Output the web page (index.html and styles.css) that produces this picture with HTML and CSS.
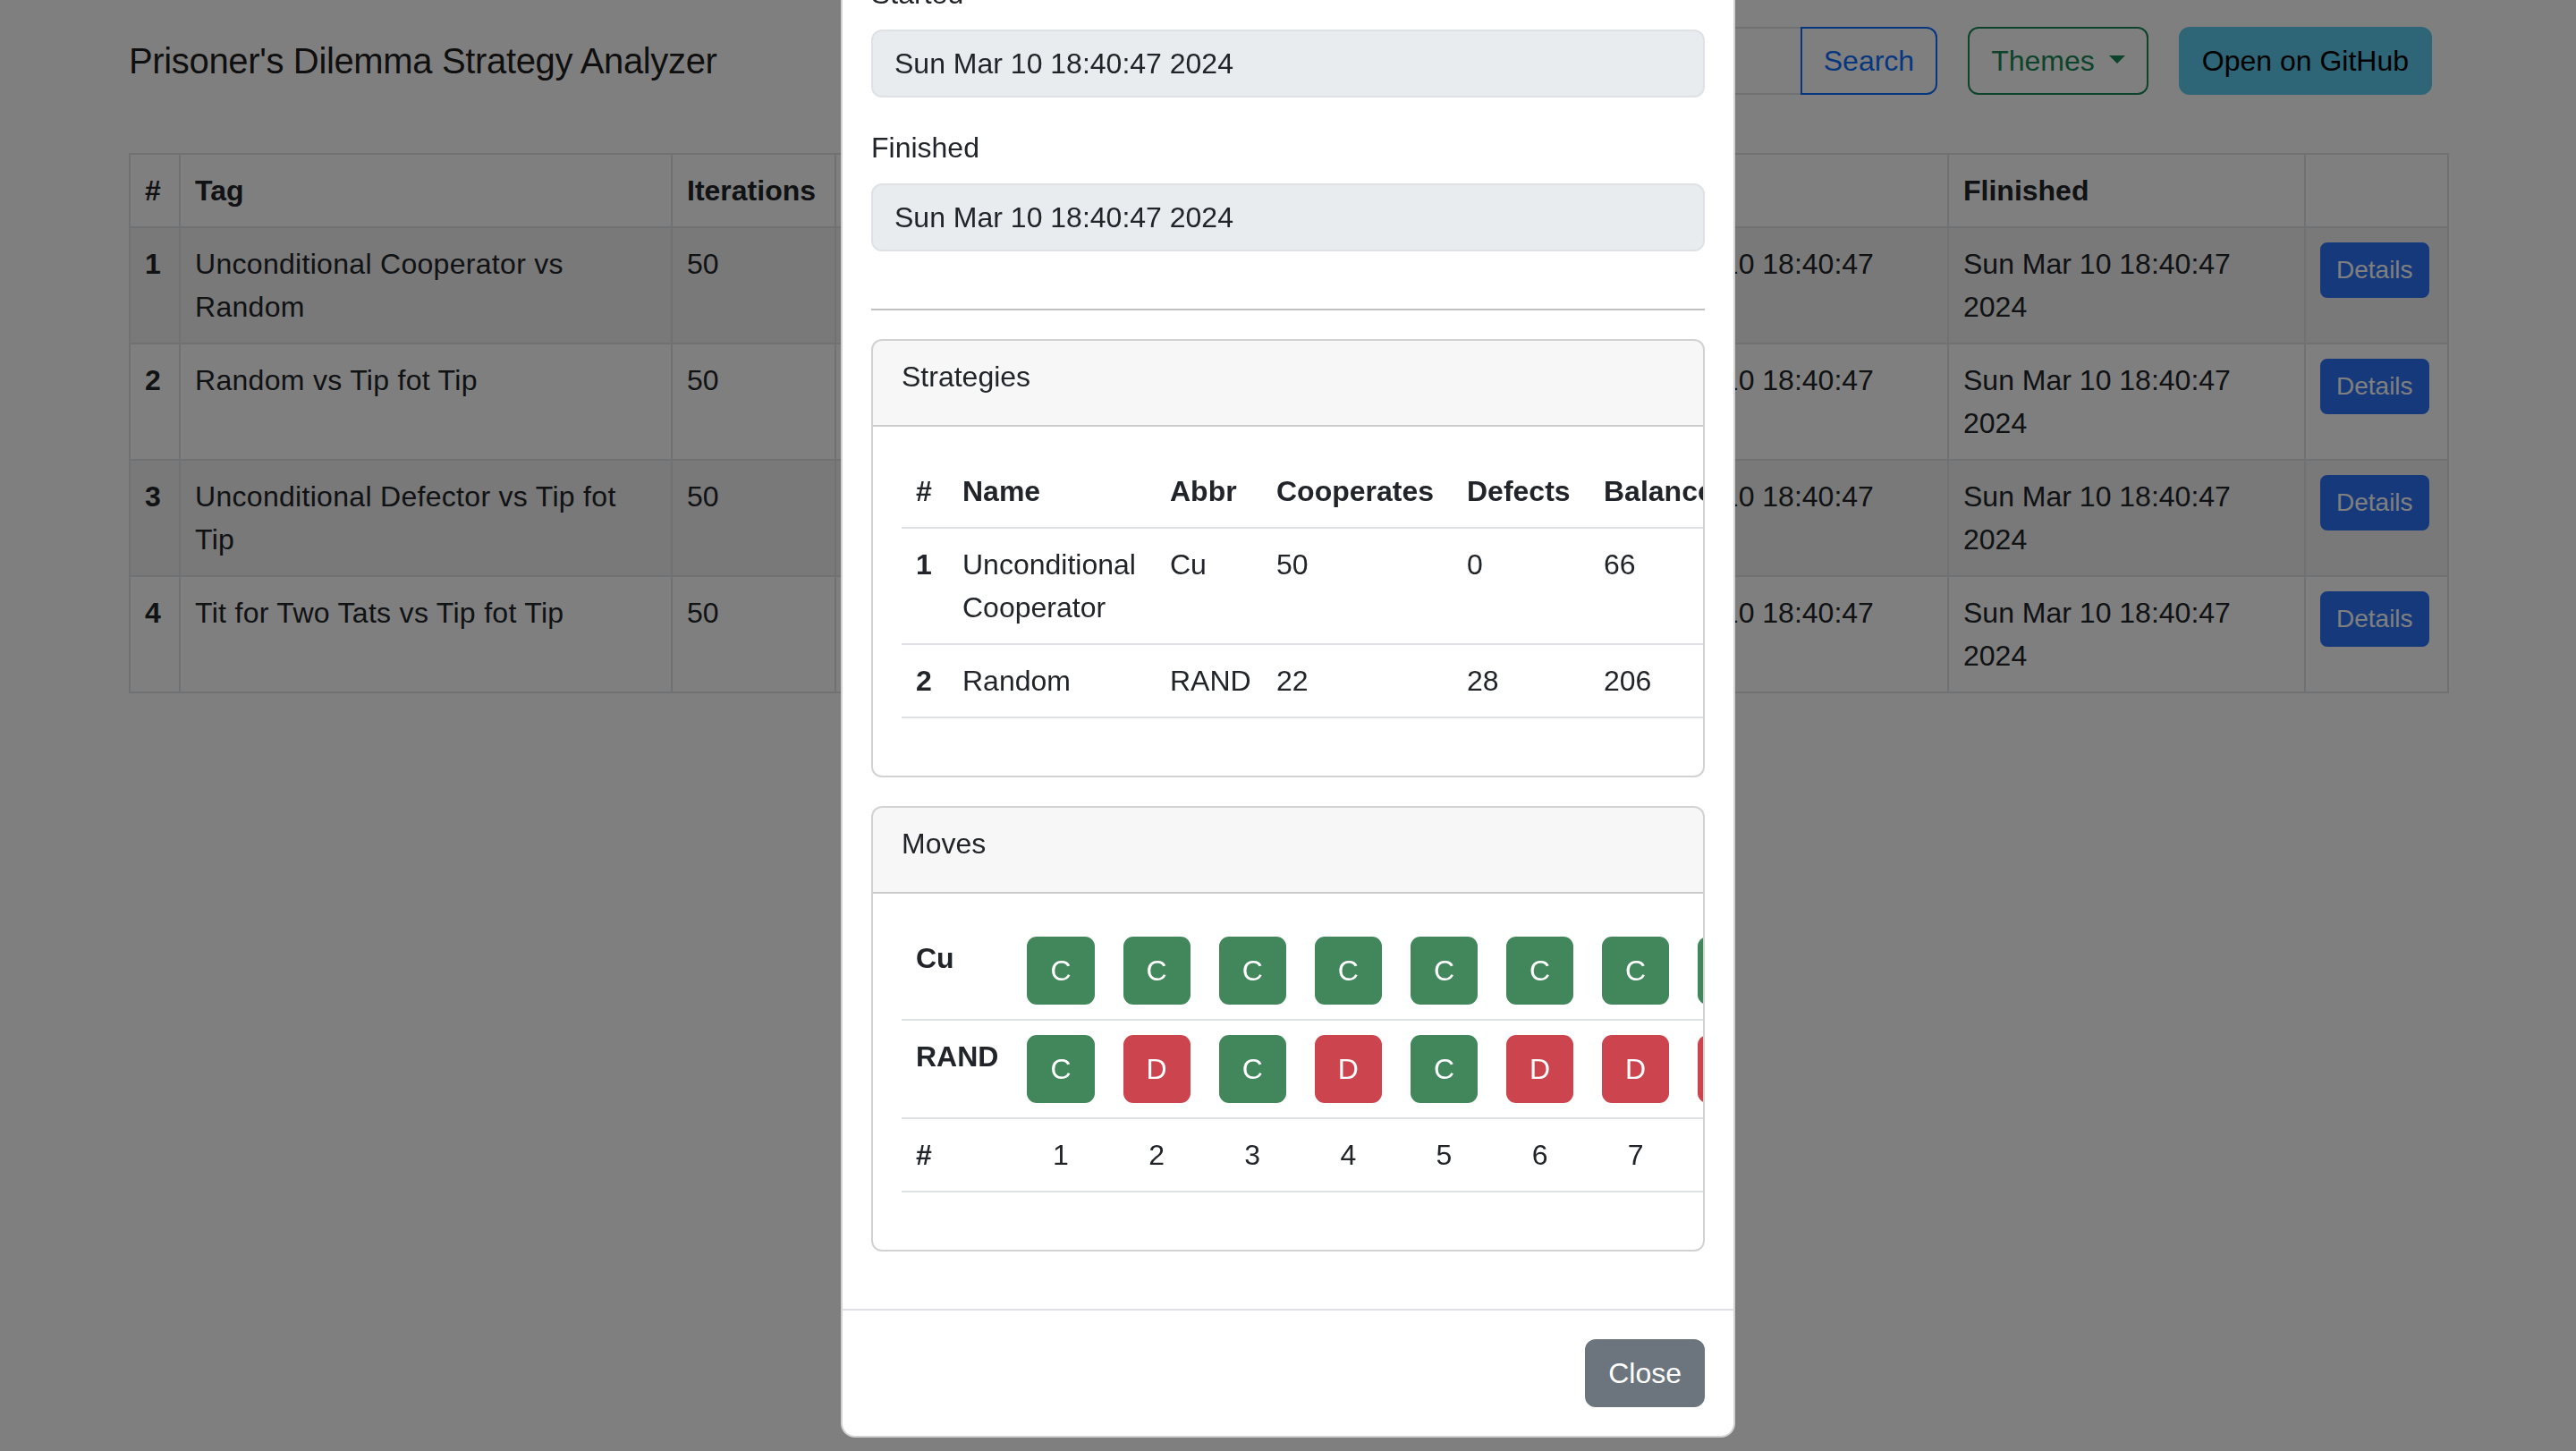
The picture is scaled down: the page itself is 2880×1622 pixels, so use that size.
FILE: index.html
```html
<!DOCTYPE html>
<html lang="en">
<head>
<meta charset="utf-8">
<title>Prisoner's Dilemma Strategy Analyzer</title>
<link rel="stylesheet" href="styles.css">
</head>
<body>
<div class="page">
  <nav class="navbar">
    <div class="container navbar-inner">
      <a class="brand" href="#">Prisoner's Dilemma Strategy Analyzer</a>
      <div class="nav-actions">
        <form class="search">
          <input class="search-input" type="search" aria-label="Search">
          <button class="btn btn-outline-primary" type="button">Search</button>
        </form>
        <button class="btn btn-outline-success dropdown-toggle" type="button">Themes</button>
        <a class="btn btn-info" href="#">Open on GitHub</a>
      </div>
    </div>
  </nav>

  <main class="container content">
    <table class="matches">
      <colgroup>
        <col class="c-num"><col class="c-tag"><col class="c-iter"><col class="c-str"><col class="c-str2"><col class="c-date"><col class="c-date"><col class="c-act">
      </colgroup>
      <thead>
        <tr><th>#</th><th>Tag</th><th>Iterations</th><th>Strategy 1</th><th>Strategy 2</th><th>Started</th><th>Flinished</th><th></th></tr>
      </thead>
      <tbody>
        <tr>
          <th>1</th><td class="tag">Unconditional Cooperator vs Random</td><td>50</td><td>Unconditional Cooperator</td><td>Random</td>
          <td>Sun Mar 10 18:40:47 2024</td><td>Sun Mar 10 18:40:47 2024</td><td><a class="btn btn-sm btn-primary" href="#">Details</a></td>
        </tr>
        <tr>
          <th>2</th><td class="tag">Random vs Tip fot Tip</td><td>50</td><td>Random</td><td>Tip fot Tip</td>
          <td>Sun Mar 10 18:40:47 2024</td><td>Sun Mar 10 18:40:47 2024</td><td><a class="btn btn-sm btn-primary" href="#">Details</a></td>
        </tr>
        <tr>
          <th>3</th><td class="tag">Unconditional Defector vs Tip fot Tip</td><td>50</td><td>Unconditional Defector</td><td>Tip fot Tip</td>
          <td>Sun Mar 10 18:40:47 2024</td><td>Sun Mar 10 18:40:47 2024</td><td><a class="btn btn-sm btn-primary" href="#">Details</a></td>
        </tr>
        <tr>
          <th>4</th><td class="tag">Tit for Two Tats vs Tip fot Tip</td><td>50</td><td>Tit for Two Tats</td><td>Tip fot Tip</td>
          <td>Sun Mar 10 18:40:47 2024</td><td>Sun Mar 10 18:40:47 2024</td><td><a class="btn btn-sm btn-primary" href="#">Details</a></td>
        </tr>
      </tbody>
    </table>
  </main>
</div>

<div class="backdrop"></div>

<div class="modal">
  <div class="modal-dialog">
    <div class="modal-content">
      <div class="modal-header">
        <h5 class="modal-title">Unconditional Cooperator vs Random</h5>
      </div>
      <div class="modal-body">
        <label class="form-label">Started</label>
        <input class="form-control" type="text" value="Sun Mar 10 18:40:47 2024" readonly>
        <label class="form-label">Finished</label>
        <input class="form-control" type="text" value="Sun Mar 10 18:40:47 2024" readonly>
        <hr class="divider">

        <div class="card">
          <div class="card-header"><div class="card-title">Strategies</div></div>
          <div class="card-body">
            <table class="data-table strategies">
              <colgroup>
                <col class="s-num"><col class="s-name"><col class="s-abbr"><col class="s-coop"><col class="s-def"><col class="s-bal">
              </colgroup>
              <thead>
                <tr><th>#</th><th>Name</th><th>Abbr</th><th>Cooperates</th><th>Defects</th><th>Balance</th></tr>
              </thead>
              <tbody>
                <tr><th>1</th><td>Unconditional Cooperator</td><td>Cu</td><td>50</td><td>0</td><td>66</td></tr>
                <tr><th>2</th><td>Random</td><td>RAND</td><td>22</td><td>28</td><td>206</td></tr>
              </tbody>
            </table>
          </div>
        </div>

        <div class="card">
          <div class="card-header"><div class="card-title">Moves</div></div>
          <div class="card-body">
            <table class="data-table moves">
              <tbody>
                <tr>
                  <th>Cu</th>
                  <td><span class="move move-c">C</span></td>
                  <td><span class="move move-c">C</span></td>
                  <td><span class="move move-c">C</span></td>
                  <td><span class="move move-c">C</span></td>
                  <td><span class="move move-c">C</span></td>
                  <td><span class="move move-c">C</span></td>
                  <td><span class="move move-c">C</span></td>
                  <td><span class="move move-c">C</span></td>
                  <td><span class="move move-c">C</span></td>
                  <td><span class="move move-c">C</span></td>
                </tr>
                <tr>
                  <th>RAND</th>
                  <td><span class="move move-c">C</span></td>
                  <td><span class="move move-d">D</span></td>
                  <td><span class="move move-c">C</span></td>
                  <td><span class="move move-d">D</span></td>
                  <td><span class="move move-c">C</span></td>
                  <td><span class="move move-d">D</span></td>
                  <td><span class="move move-d">D</span></td>
                  <td><span class="move move-d">D</span></td>
                  <td><span class="move move-c">C</span></td>
                  <td><span class="move move-d">D</span></td>
                </tr>
                <tr class="round-row">
                  <th>#</th>
                  <td>1</td><td>2</td><td>3</td><td>4</td><td>5</td><td>6</td><td>7</td><td>8</td><td>9</td><td>10</td>
                </tr>
              </tbody>
            </table>
          </div>
        </div>
      </div>
      <div class="modal-footer">
        <button class="btn btn-secondary" type="button">Close</button>
      </div>
    </div>
  </div>
</div>
</body>
</html>
```

FILE: styles.css
```css
* { box-sizing: border-box; }

html, body { margin: 0; }

body {
  font-family: "Liberation Sans", Arial, sans-serif;
  font-size: 32px;
  line-height: 1.5;
  color: #212529;
  background: #fff;
}

.container { width: 2592px; margin: 0 auto; }

/* ---------- navbar ---------- */
.navbar { padding: 30px 0; }

.navbar-inner {
  display: flex;
  align-items: center;
  justify-content: space-between;
}

.brand {
  font-size: 40px;
  line-height: 60px;
  letter-spacing: -0.35px;
  color: rgba(0, 0, 0, .9);
  text-decoration: none;
}

.nav-actions {
  display: flex;
  align-items: center;
  gap: 34px;
  margin-right: 17px;
}

.search { display: flex; margin: 0; }

.search-input {
  width: 560px;
  height: 76px;
  padding: 12px 24px;
  font: inherit;
  border: 2px solid #dee2e6;
  border-right: 0;
  border-radius: 12px 0 0 12px;
  background: #fff;
}

.btn {
  display: inline-block;
  font-family: inherit;
  font-size: 32px;
  line-height: 48px;
  padding: 12px 24px;
  border: 2px solid transparent;
  border-radius: 12px;
  background: transparent;
  text-decoration: none;
  white-space: nowrap;
  cursor: pointer;
}

.btn-outline-primary { color: #0d6efd; border-color: #0d6efd; }
.search .btn { border-radius: 0 12px 12px 0; }
.btn-outline-success { color: #198754; border-color: #198754; }
.btn-info { background: #5ccbee; border-color: #5ccbee; color: #000; }
.btn-primary { background: #2b72f5; border-color: #2b72f5; color: #fff; }
.btn-secondary { background: #6c757d; border-color: #6c757d; color: #fff; }

.btn-sm {
  font-size: 28px;
  line-height: 42px;
  padding: 8px 16px;
  border-radius: 8px;
}

.dropdown-toggle::after {
  content: "";
  display: inline-block;
  margin-left: .5em;
  vertical-align: .255em;
  border-top: .3em solid;
  border-right: .3em solid transparent;
  border-left: .3em solid transparent;
  border-bottom: 0;
}

/* ---------- matches table ---------- */
.content { padding-top: 35px; }

.matches {
  width: 100%;
  table-layout: fixed;
  border-collapse: collapse;
  margin-bottom: 32px;
}

.c-num { width: 56px; }
.c-tag { width: 550px; }
.c-iter { width: 183px; }
.c-str { width: 422px; }
.c-str2 { width: 423px; }
.c-date { width: 399px; }
.c-act { width: 160px; }

.matches th,
.matches td {
  padding: 16px;
  border: 2px solid #dee2e6;
  text-align: left;
  vertical-align: top;
}

.matches .tag { letter-spacing: 0.3px; }

.matches tbody tr:nth-child(odd) > * { background: rgba(0, 0, 0, .05); }

/* ---------- modal ---------- */
.backdrop {
  position: fixed;
  inset: 0;
  background: rgba(0, 0, 0, .5);
}

.modal {
  position: fixed;
  inset: 0;
  overflow: hidden;
  display: flex;
  flex-direction: column;
  justify-content: flex-end;
  align-items: center;
  padding-bottom: 15px;
}

.modal-dialog { width: 1000px; flex-shrink: 0; }

.modal-content {
  background: #fff;
  border: 2px solid rgba(0, 0, 0, .175);
  border-radius: 16px;
}

.modal-header {
  padding: 32px;
  border-bottom: 2px solid #dee2e6;
}

.modal-title {
  margin: 0;
  font-size: 40px;
  line-height: 1.2;
  font-weight: 500;
}

.modal-body { padding: 32px; }

.form-label { display: block; margin-bottom: 16px; }

.form-control {
  display: block;
  width: 100%;
  height: 76px;
  margin: 0 0 32px;
  padding: 12px 24px;
  font: inherit;
  color: #212529;
  background: #e9ecef;
  border: 2px solid #dee2e6;
  border-radius: 12px;
}

.divider {
  margin: 64px 0 32px;
  border: 0;
  border-top: 2px solid rgba(0, 0, 0, .25);
}

.card {
  border: 2px solid rgba(0, 0, 0, .175);
  border-radius: 12px;
  overflow: hidden;
  margin-bottom: 32px;
}

.card-header {
  padding: 16px 32px;
  background: rgba(0, 0, 0, .03);
  border-bottom: 2px solid rgba(0, 0, 0, .175);
}

.card-title { margin-bottom: 14px; }

.card-body { padding: 32px; }

.data-table {
  border-collapse: collapse;
  margin-bottom: 32px;
}

.data-table th,
.data-table td {
  padding: 16px;
  border-bottom: 2px solid #dee2e6;
  text-align: left;
  vertical-align: top;
}

.strategies { table-layout: fixed; width: 929px; }
.s-num { width: 52px; }
.s-name { width: 232px; }
.s-abbr { width: 119px; }
.s-coop { width: 213px; }
.s-def { width: 153px; }
.s-bal { width: 160px; }

.moves { width: 100%; }
.moves td { text-align: center; }

.move {
  display: inline-block;
  padding: 12px 24px;
  border: 2px solid transparent;
  border-radius: 11px;
  line-height: 48px;
  color: #fff;
}

.move-c { background: #41875b; }
.move-d { background: #cb444e; }

.modal-footer {
  display: flex;
  justify-content: flex-end;
  padding: 24px;
  border-top: 2px solid #dee2e6;
}

.modal-footer .btn { margin: 8px; }
```
